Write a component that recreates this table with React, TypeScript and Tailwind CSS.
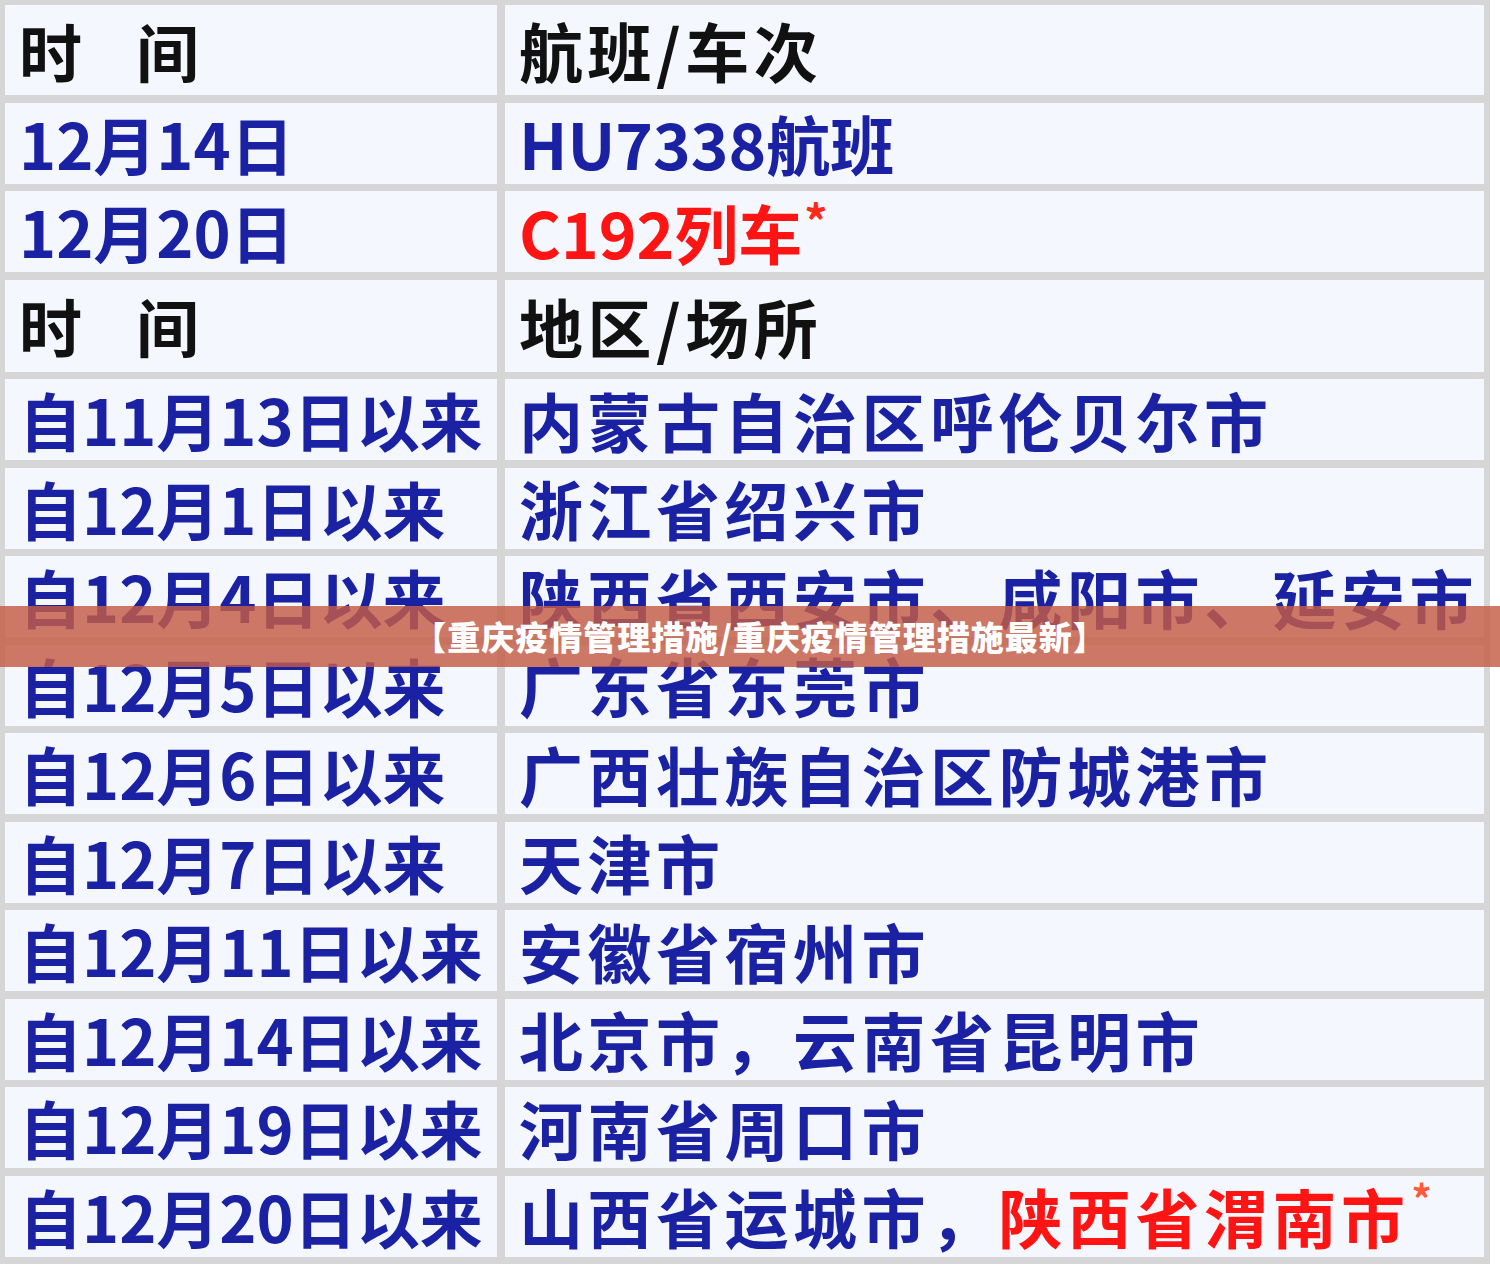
import React from "react";

const BLUE = "text-[#1a22a3]";
const RED = "text-[#ff1414]";

type Row = { left: React.ReactNode; right: React.ReactNode };

const Star = ({ small }: { small?: boolean }) => (
  <span
    className={
      small
        ? "text-[#ff5a3c] text-[40px] align-top relative top-[-4px] ml-[2px]"
        : "text-[#ff2a1a] text-[46px] align-top relative top-[-2px] ml-[2px]"
    }
  >
    *
  </span>
);

const Header = ({ text }: { text: string }) => (
  <span className="text-[#111111]">{text}</span>
);

const TimeHeader = () => (
  <span className="text-[#111111] flex gap-[54px]">
    <span>时</span>
    <span>间</span>
  </span>
);

const rows: Row[] = [
  { left: <TimeHeader />, right: <Header text="航班/车次" /> },
  {
    left: <span className={BLUE}>12月14日</span>,
    right: <span className={`${BLUE} tracking-[0px]`}>HU7338航班</span>,
  },
  {
    left: <span className={BLUE}>12月20日</span>,
    right: (
      <span className={`${RED} tracking-[0px]`}>
        C192列车
        <Star />
      </span>
    ),
  },
  { left: <TimeHeader />, right: <Header text="地区/场所" /> },
  { left: <span className={BLUE}>自11月13日以来</span>, right: <span className={BLUE}>内蒙古自治区呼伦贝尔市</span> },
  { left: <span className={BLUE}>自12月1日以来</span>, right: <span className={BLUE}>浙江省绍兴市</span> },
  { left: <span className={BLUE}>自12月4日以来</span>, right: <span className={BLUE}>陕西省西安市、咸阳市、延安市</span> },
  { left: <span className={BLUE}>自12月5日以来</span>, right: <span className={BLUE}>广东省东莞市</span> },
  { left: <span className={BLUE}>自12月6日以来</span>, right: <span className={BLUE}>广西壮族自治区防城港市</span> },
  { left: <span className={BLUE}>自12月7日以来</span>, right: <span className={BLUE}>天津市</span> },
  { left: <span className={BLUE}>自12月11日以来</span>, right: <span className={BLUE}>安徽省宿州市</span> },
  { left: <span className={BLUE}>自12月14日以来</span>, right: <span className={BLUE}>北京市，云南省昆明市</span> },
  { left: <span className={BLUE}>自12月19日以来</span>, right: <span className={BLUE}>河南省周口市</span> },
  {
    left: <span className={BLUE}>自12月20日以来</span>,
    right: (
      <span>
        <span className={BLUE}>山西省运城市，</span>
        <span className={RED}>
          陕西省渭南市
          <Star small />
        </span>
      </span>
    ),
  },
];

export default function App() {
  return (
    <div className="relative w-[1500px] h-[1274px] bg-white overflow-hidden">
      <div
        className="w-[1490px] bg-[#d6d6d6] pt-[5px] pl-[5px] pr-[6px] pb-[7px] grid grid-cols-[492px_979px] grid-rows-[90px_81px_81px_92px_repeat(10,81px)] gap-x-[8px] gap-y-[7.5px]"
        style={{ fontFamily: '"Noto Sans CJK SC", "Noto Sans", sans-serif' }}
      >
        {rows.map((r, i) => (
          <React.Fragment key={i}>
            <div className="bg-[#f4f7fd] flex items-center pl-[14px] font-bold text-[63px] leading-[1.15] tracking-[0px] whitespace-nowrap">
              {r.left}
            </div>
            <div className="bg-[#f4f7fd] flex items-center pl-[14px] font-bold text-[64px] leading-[1.15] tracking-[4.5px] whitespace-nowrap">
              {r.right}
            </div>
          </React.Fragment>
        ))}
      </div>
      <div
        className="absolute left-0 top-[606px] w-[1500px] h-[61px] bg-[rgba(196,92,70,0.82)] flex items-center justify-center"
        style={{ fontFamily: '"Noto Sans CJK SC", "Noto Sans", sans-serif' }}
      >
        <span className="text-white font-black text-[33px] leading-none tracking-[1px] pl-[20px]">
          【重庆疫情管理措施/重庆疫情管理措施最新】
        </span>
      </div>
    </div>
  );
}
